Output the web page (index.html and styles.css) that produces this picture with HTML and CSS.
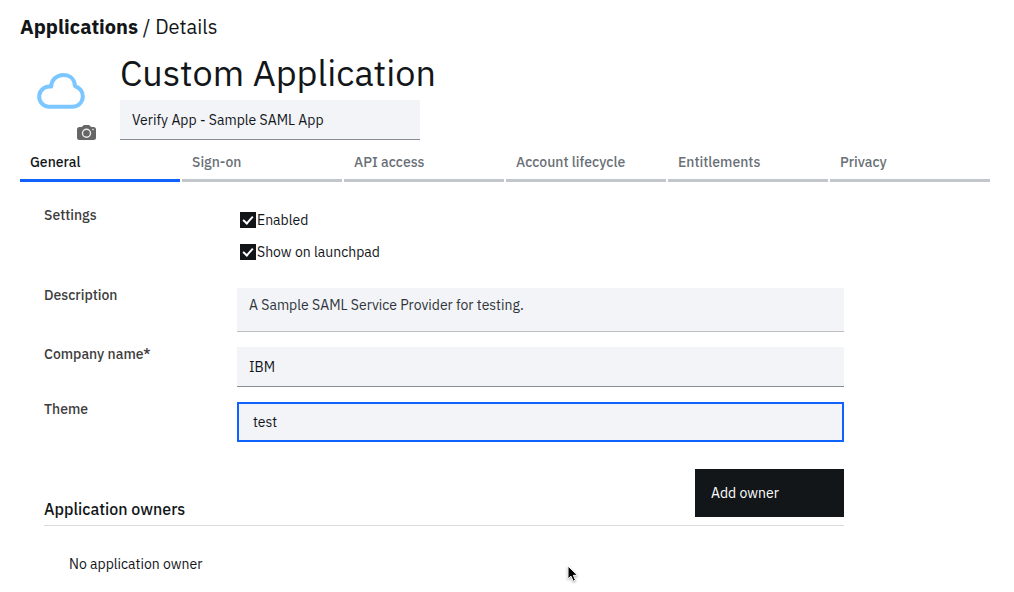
FILE: index.html
```
<!DOCTYPE html>
<html lang="en">
    <head>
        <meta charset="utf-8">
        <title>Applications / Details</title>
        <link rel="stylesheet" href="styles.css">
    </head>
    <body>
        <nav class="breadcrumb"><a href="#applications">Applications</a> / Details</nav>
        <header class="app-header">
            <div class="app-logo">
                <svg class="cloud" viewBox="0 0 50 38" aria-hidden="true">
                    <path d="M12.500 34.800a10.200 10.200 0 1 1 2.700-20.200C15.300 8 20.500 3 27.500 3c6.800 0 11.200 4.500 11.500 11.100 4.800 1.700 7.800 5.800 7.800 10.500 0 5.800-4.700 10.200-10.500 10.200z"/>
                </svg>
                <button class="photo" type="button" aria-label="Change logo">
                    <svg viewBox="0 0 19 15" aria-hidden="true">
                        <path fill="#666" d="M2.500 2H5l1.200-1.400Q6.700 0 7.500 0h4q.8 0 1.300.6L14 2h2.500Q19 2 19 4.500v8q0 2.500-2.500 2.500h-14Q0 15 0 12.500v-8Q0 2 2.500 2z"/>
                        <circle cx="9.500" cy="8.300" r="4" fill="none" stroke="#eee" stroke-width="1.400"/>
                        <circle cx="16" cy="4.500" r="0.800" fill="#eee"/>
                    </svg>
                </button>
            </div>
            <div class="app-title">
                <h1>Custom Application</h1>
                <input class="field name" type="text" value="Verify App - Sample SAML App" aria-label="Application name">
            </div>
        </header>
        <div class="tabs" role="tablist">
            <button class="tab active" type="button" role="tab" aria-selected="true">General</button>
            <button class="tab" type="button" role="tab">Sign-on</button>
            <button class="tab" type="button" role="tab">API access</button>
            <button class="tab" type="button" role="tab">Account lifecycle</button>
            <button class="tab" type="button" role="tab">Entitlements</button>
            <button class="tab" type="button" role="tab">Privacy</button>
        </div>
        <main>
            <form class="settings">
                <div class="row" role="group" aria-labelledby="settings-label">
                    <span class="row-label" id="settings-label">Settings</span>
                    <div class="checks">
                        <label class="check"><input type="checkbox" checked>Enabled</label>
                        <label class="check"><input type="checkbox" checked>Show on launchpad</label>
                    </div>
                </div>
                <div class="row">
                    <label class="row-label" for="description">Description</label>
                    <textarea class="field" id="description" rows="1">A Sample SAML Service Provider for testing.</textarea>
                </div>
                <div class="row">
                    <label class="row-label" for="company">Company name*</label>
                    <input class="field" id="company" type="text" value="IBM" required>
                </div>
                <div class="row">
                    <label class="row-label" for="theme">Theme</label>
                    <input class="field focused" id="theme" type="text" value="test">
                </div>
            </form>
            <section class="owners">
                <div class="owners-head">
                    <h2>Application owners</h2>
                    <button class="add" type="button">Add owner</button>
                </div>
                <p>No application owner</p>
            </section>
        </main>
        <svg class="pointer" viewBox="0 0 12 18" aria-hidden="true">
            <path d="M1 1v13l3-2.800 2.200 5 2.300-1-2.200-4.900h4.200z"/>
        </svg>
    </body>
</html>
```
FILE: styles.css
```
*, *::before {box-sizing:border-box;}
body {position:relative;margin:0;padding:13px 24px 16px 20px;background:#fff;color:#121619;font:14px/20px "IBM Plex Sans","Noto Sans",sans-serif;}
button, input, textarea {font:inherit;color:inherit;}
h1, h2, p {margin:0;}

.breadcrumb {font-size:20px;line-height:28px;}
.breadcrumb a {color:inherit;font-weight:700;text-decoration:none;}

.app-header {display:flex;gap:20px;margin-top:11px;}
.app-logo {display:flex;flex-direction:column;justify-content:space-between;width:80px;padding:20px 4px 0 16px;}
.cloud {width:50px;height:38px;fill:none;stroke:#7cc7ff;stroke-width:4;stroke-linejoin:round;}
.photo {align-self:flex-end;width:19px;height:15px;padding:0;border:0;background:none;}
.photo svg {display:block;}
h1 {font-size:36px;line-height:42px;font-weight:400;}

.field {display:block;width:100%;height:40px;margin:0;padding:0 12px;border:0;border-bottom:1px solid #878d96;border-radius:0;background:#f2f4f8;outline:0;}
.name {width:300px;margin-top:6px;}
textarea.field {height:44px;padding-top:7px;border-color:#bebebe;resize:none;overflow:hidden;color:#30343a;}
.focused {padding:0 14px;border:2px solid #0f62fe;}

.tabs {display:flex;gap:2px;}
.tab {flex:1;height:42px;padding:5px 10px 0;border:0;border-bottom:3px solid #c1c7cd;background:none;color:#697077;font-weight:500;text-align:left;white-space:nowrap;}
.tab.active {border-color:#0f62fe;color:#121619;}

main {max-width:824px;padding:23px 0 0 24px;}
.settings {display:grid;gap:12px;}
.row {display:grid;grid-template-columns:193px 1fr;}
.row-label {color:#3d3d3d;font-weight:500;}
.row .field, .checks {margin-top:3px;}
.checks {display:grid;gap:8px;padding:0 0 9px 3px;}
.check {display:flex;align-items:center;gap:1px;height:24px;}
.check input {display:grid;place-items:center;width:16px;height:16px;margin:0;appearance:none;background:#121619;}
.check input:checked::before {content:"";width:10px;height:6px;margin-bottom:2px;border:solid #fff;border-width:0 0 2px 2px;transform:rotate(-48deg);}

.owners {margin-top:27px;}
.owners-head {display:flex;justify-content:space-between;align-items:flex-end;padding-bottom:8px;border-bottom:1px solid #dcdcdc;}
h2 {font-size:16px;line-height:16px;font-weight:500;}
.add {width:149px;height:48px;padding:0 16px;border:0;background:#121619;color:#fff;text-align:left;}
.owners p {padding:28px 25px 0;}

.pointer {position:absolute;left:567px;top:565px;width:12px;height:18px;fill:#000;stroke:#fff;stroke-width:1;filter:drop-shadow(0 1px 1px #0005);}
```
